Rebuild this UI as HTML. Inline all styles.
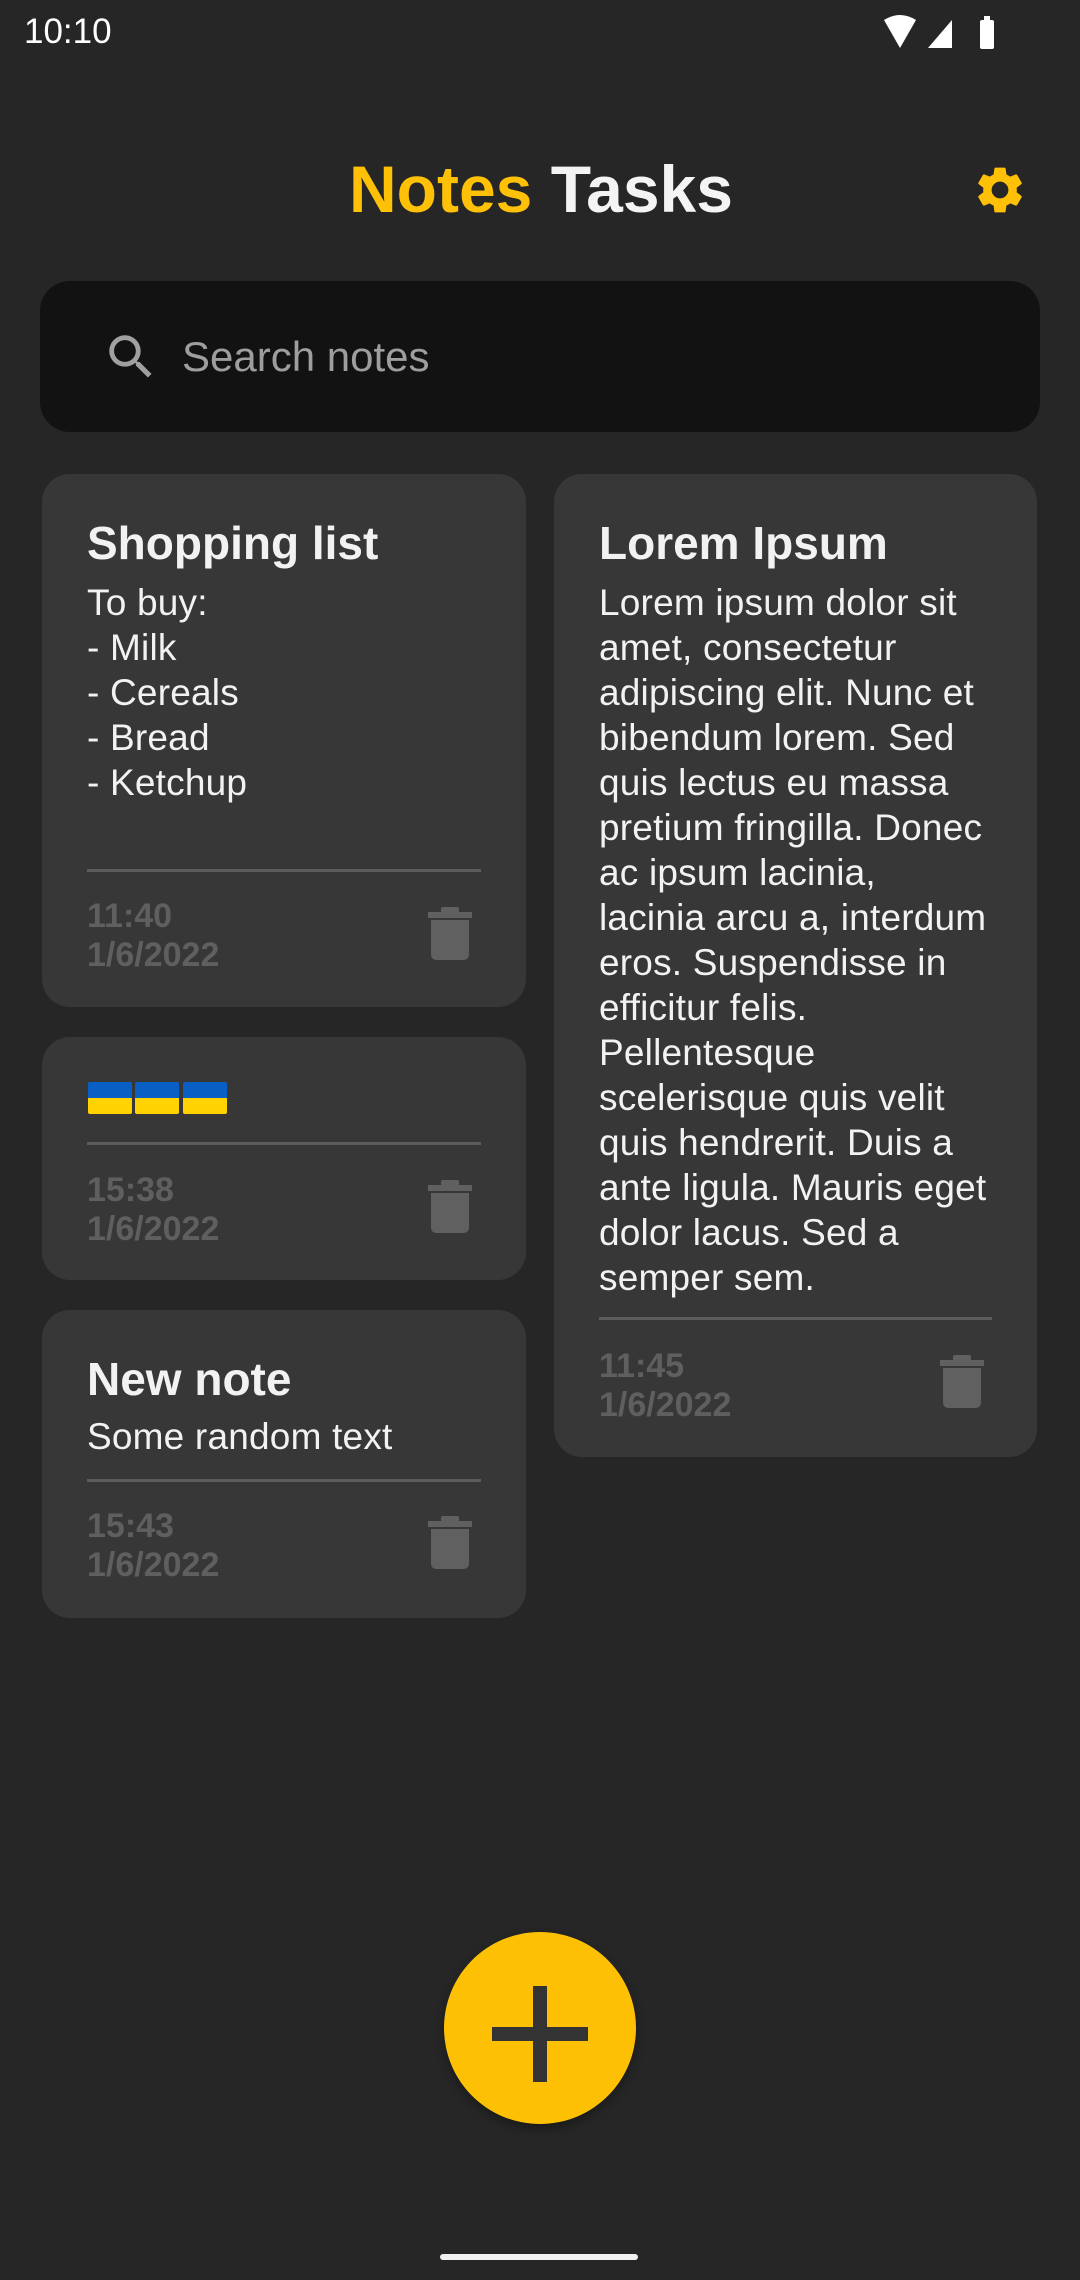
<!DOCTYPE html>
<html><head><meta charset="utf-8"><style>
*{margin:0;padding:0;box-sizing:border-box}
body{width:1080px;height:2280px;background:#262626;position:relative;overflow:hidden;font-family:"Liberation Sans",sans-serif;color:#f2f2f2}
.a{position:absolute}
.card{position:absolute;background:#373737;border-radius:28px}
.t{position:absolute;left:45px;font-weight:bold;font-size:46px;line-height:1;white-space:nowrap}
.b{position:absolute;left:45px;font-size:37px;line-height:45px;white-space:pre;letter-spacing:0.2px}
.d{position:absolute;left:45px;right:45px;height:3px;background:#5c5c5c}
.tm{position:absolute;left:45px;font-weight:bold;font-size:34px;line-height:39px;color:#5f5f5f}
.tr{position:absolute;width:44px;height:54px}
.fl{position:absolute;top:1082px;width:44px;height:32px;background:linear-gradient(#0a5fc4 0 50%,#ffd200 50% 100%);border-radius:2px}
</style></head><body>
<div class="a" style="left:24px;top:12px;font-size:35px;color:#fff">10:10</div>
<svg class="a" style="left:880px;top:14px" width="125" height="38" viewBox="0 0 125 38">
<path d="M4 6 Q20 -4 36 6 L20 34 Z" fill="#fff"/>
<path d="M48 34 L72 6 L72 34 Z" fill="#fff"/>
<rect x="100" y="6" width="14" height="29" rx="2" fill="#fff"/><rect x="104" y="2" width="6" height="5" fill="#fff"/>
</svg>
<div class="a" style="left:349px;top:151px;font-size:66px;font-weight:bold;color:#FFC107;line-height:76px">Notes <span style="color:#f4f4f4">Tasks</span></div>
<svg class="a" style="left:972px;top:162px" width="56" height="56" viewBox="0 0 24 24"><path fill="#FFC107" d="M19.14 12.94c.04-.3.06-.61.06-.94 0-.32-.02-.64-.07-.94l2.030-1.58a.49.49 0 0 0 .12-.61l-1.92-3.32a.488.488 0 0 0-.59-.22l-2.39.96c-.5-.38-1.030-.7-1.62-.94l-.36-2.54a.484.484 0 0 0-.48-.41h-3.84c-.24 0-.43.17-.47.41l-.36 2.54c-.59.24-1.13.57-1.62.94l-2.39-.96c-.22-.08-.47 0-.59.22L2.74 8.87c-.12.21-.08.47.12.61l2.030 1.58c-.05.3-.09.63-.09.94s.02.64.07.94l-2.030 1.58a.49.49 0 0 0-.12.61l1.92 3.32c.12.22.37.29.59.22l2.39-.96c.5.38 1.030.7 1.62.94l.36 2.54c.05.24.24.41.48.41h3.84c.24 0 .44-.17.47-.41l.36-2.54c.59-.24 1.13-.56 1.62-.94l2.39.96c.22.08.47 0 .59-.22l1.92-3.32c.12-.22.07-.47-.12-.61l-2.010-1.58zM12 15.6c-1.98 0-3.6-1.62-3.6-3.6s1.62-3.6 3.6-3.6 3.6 1.62 3.6 3.6-1.62 3.6-3.6 3.6z"/></svg>
<div class="a" style="left:40px;top:281px;width:1000px;height:151px;background:#121212;border-radius:30px"></div>
<svg class="a" style="left:102px;top:328px" width="58" height="58" viewBox="0 0 24 24"><path fill="#a0a0a0" d="M15.5 14h-.79l-.28-.27A6.47 6.47 0 0 0 16 9.5 6.5 6.5 0 1 0 9.5 16c1.61 0 3.090-.59 4.230-1.57l.27.28v.79l5 4.99L20.49 19l-4.99-5zm-6 0C7.010 14 5 11.99 5 9.5S7.010 5 9.5 5 14 7.010 14 9.5 11.99 14 9.5 14z"/></svg>
<div class="a" style="left:182px;top:333px;font-size:42px;color:#9e9e9e">Search notes</div>

<svg width="0" height="0" style="position:absolute"><defs><symbol id="tr" viewBox="0 0 44 54"><rect x="0" y="6" width="44" height="6" fill="#606060"/><rect x="13" y="1" width="18" height="6" rx="2" fill="#606060"/><path d="M3 14 H41 V48 Q41 54 35 54 H9 Q3 54 3 48Z" fill="#606060"/></symbol></defs></svg>

<div class="card" style="left:42px;top:474px;width:484px;height:533px">
<div class="t" style="top:46px">Shopping list</div>
<div class="b" style="top:106px">To buy:
- Milk
- Cereals
- Bread
- Ketchup</div>
<div class="d" style="top:395px"></div>
<div class="tm" style="top:423px">11:40<br>1/6/2022</div>
<svg class="tr" style="left:386px;top:432px"><use href="#tr"/></svg>
</div>

<div class="card" style="left:42px;top:1037px;width:484px;height:243px">
<div class="d" style="top:105px"></div>
<div class="tm" style="top:134px">15:38<br>1/6/2022</div>
<svg class="tr" style="left:386px;top:142px"><use href="#tr"/></svg>
</div>
<div class="fl" style="left:88px"></div><div class="fl" style="left:135px"></div><div class="fl" style="left:183px"></div>

<div class="card" style="left:42px;top:1310px;width:484px;height:308px">
<div class="t" style="top:46px">New note</div>
<div class="b" style="top:104px">Some random text</div>
<div class="d" style="top:169px"></div>
<div class="tm" style="top:197px">15:43<br>1/6/2022</div>
<svg class="tr" style="left:386px;top:205px"><use href="#tr"/></svg>
</div>

<div class="card" style="left:554px;top:474px;width:483px;height:983px">
<div class="t" style="top:46px">Lorem Ipsum</div>
<div class="b" style="top:106px">Lorem ipsum dolor sit
amet, consectetur
adipiscing elit. Nunc et
bibendum lorem. Sed
quis lectus eu massa
pretium fringilla. Donec
ac ipsum lacinia,
lacinia arcu a, interdum
eros. Suspendisse in
efficitur felis.
Pellentesque
scelerisque quis velit
quis hendrerit. Duis a
ante ligula. Mauris eget
dolor lacus. Sed a
semper sem.</div>
<div class="d" style="top:843px"></div>
<div class="tm" style="top:873px">11:45<br>1/6/2022</div>
<svg class="tr" style="left:386px;top:880px"><use href="#tr"/></svg>
</div>

<div class="a" style="left:444px;top:1932px;width:192px;height:192px;border-radius:50%;background:#FDC004;box-shadow:0 4px 10px rgba(0,0,0,.35)"></div>
<div class="a" style="left:492px;top:2027px;width:96px;height:14px;background:#333"></div>
<div class="a" style="left:533px;top:1986px;width:14px;height:96px;background:#333"></div>
<div class="a" style="left:440px;top:2254px;width:198px;height:6px;border-radius:3px;background:#f0f0f0"></div>
</body></html>
